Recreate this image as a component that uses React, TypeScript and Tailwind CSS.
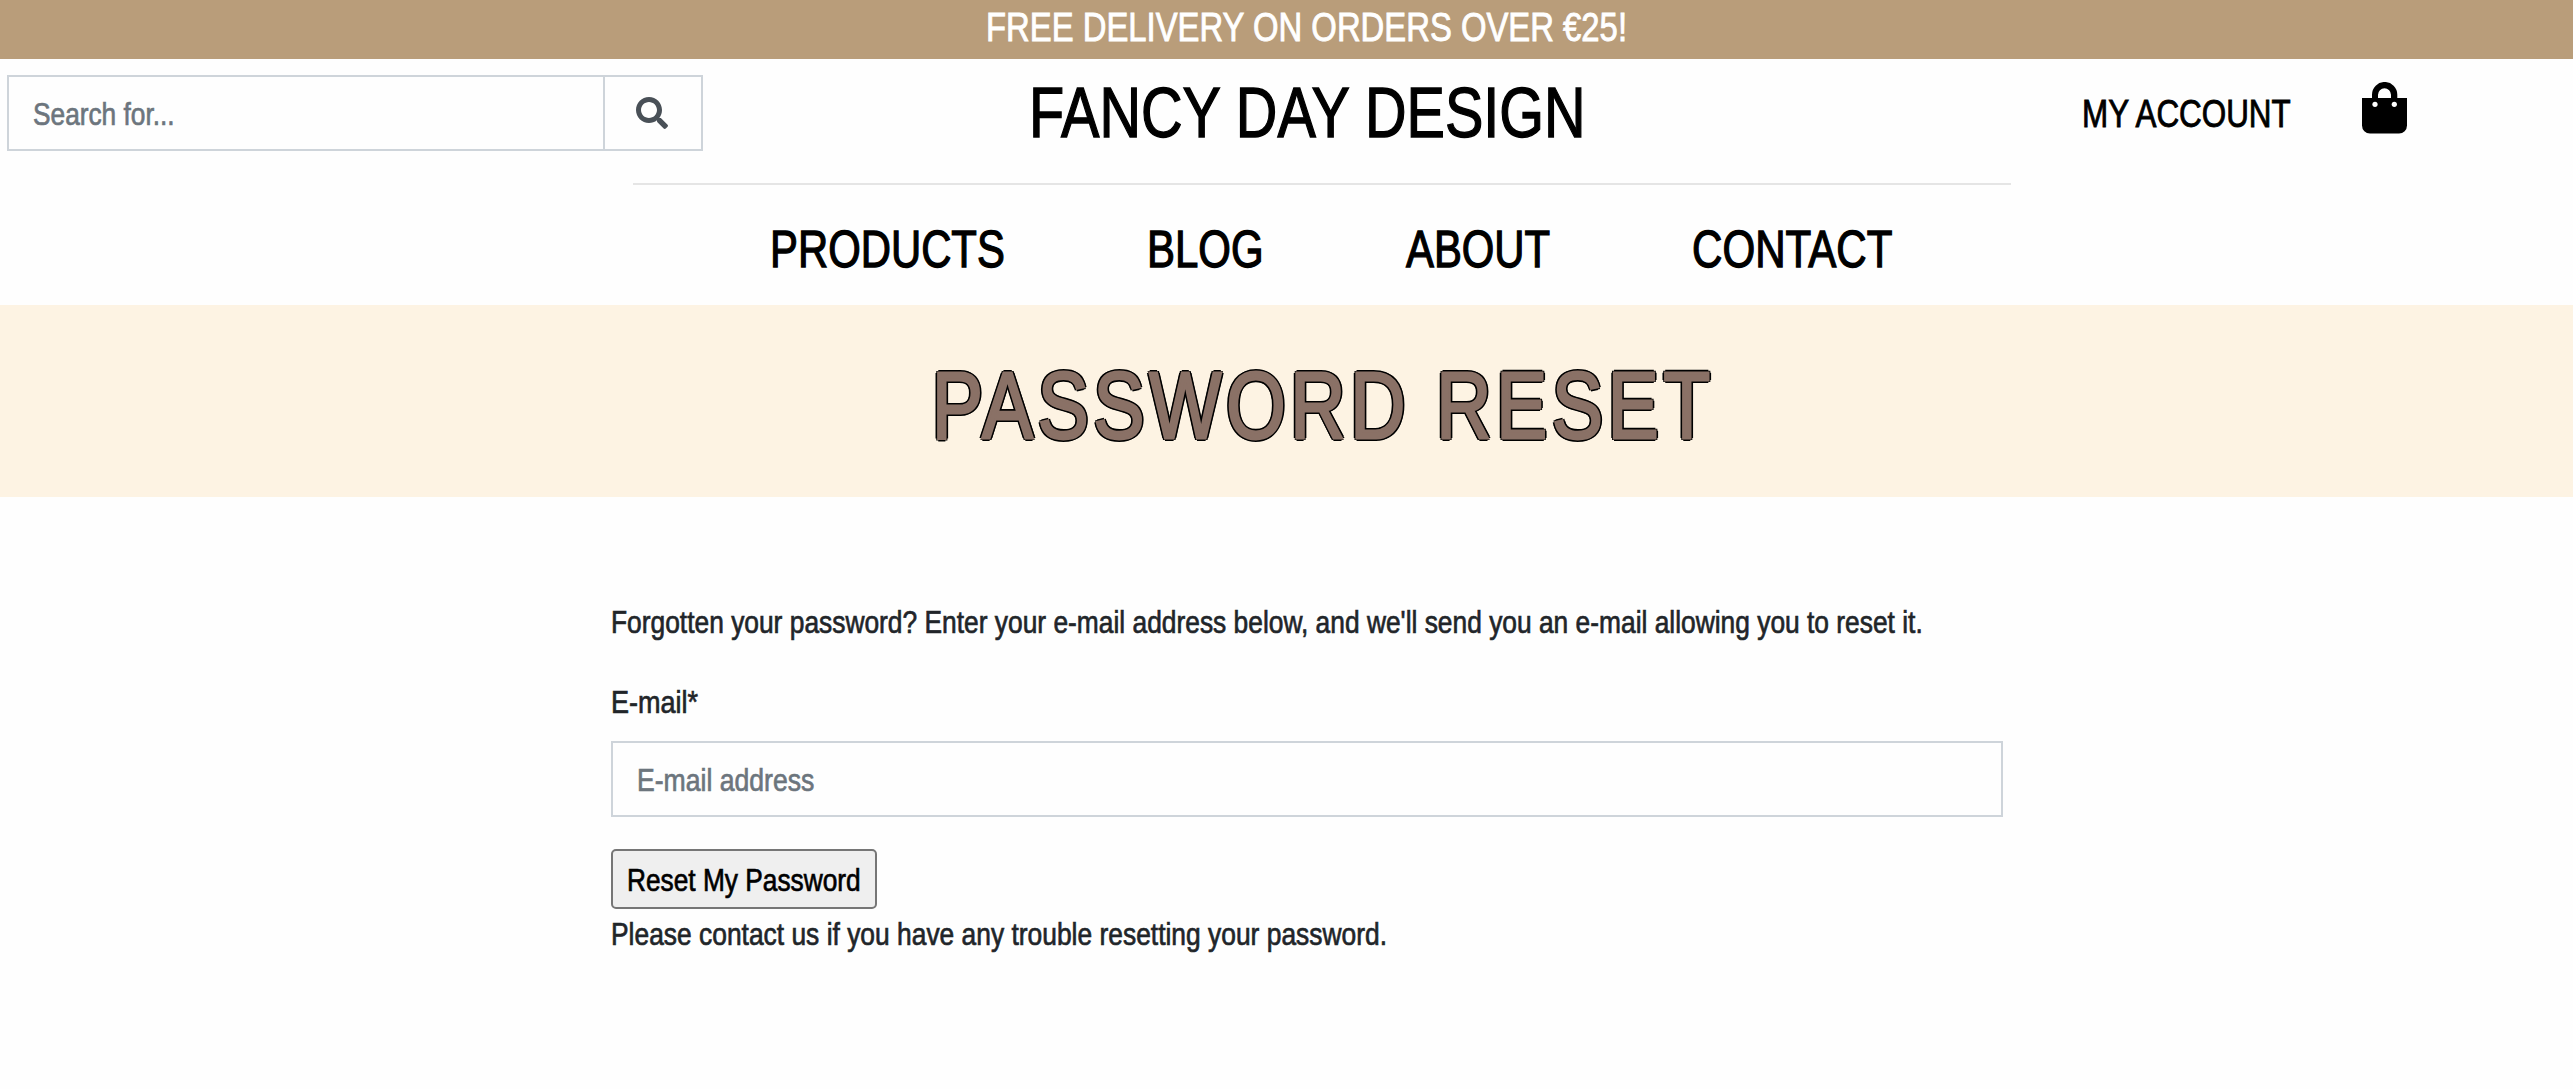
import { useLayoutEffect, useRef } from 'react';
import { FaSearch } from 'react-icons/fa';

/** A single line of text condensed horizontally to fill its box. */
function Condensed({ children, className }: { children: string; className: string }) {
  const box = useRef<HTMLSpanElement>(null);
  const inner = useRef<HTMLSpanElement>(null);
  useLayoutEffect(() => {
    if (box.current && inner.current) {
      inner.current.style.transform = `scaleX(${box.current.clientWidth / inner.current.offsetWidth})`;
    }
  }, [children]);
  return (
    <span ref={box} className={`block shrink-0 ${className}`}>
      <span ref={inner} className="inline-block origin-left whitespace-nowrap">
        {children}
      </span>
    </span>
  );
}

function BagIcon() {
  return (
    <svg viewBox="0 0 45 52" className="block h-[52px] w-[45px]" aria-hidden="true">
      <path
        fillRule="evenodd"
        d="M0 16H10V12.6a12.65 12.65 0 0 1 25.3 0V16H45V43.5a8 8 0 0 1-8 8H8a8 8 0 0 1-8-8ZM16 16H29V12.8a6.5 6.5 0 0 0-13 0Z"
      />
      <circle cx="13" cy="22.3" r="2.6" fill="white" />
      <circle cx="32.3" cy="22.3" r="2.6" fill="white" />
    </svg>
  );
}

export default function App() {
  return (
    <div className="h-[1089px] w-[2573px] overflow-hidden bg-[#fefefe] font-['Liberation_Sans',sans-serif] text-[32px] leading-[48px] text-[#212529] [-webkit-text-stroke:0.7px]">
      <div className="h-[59px] bg-[#b99d7a] pl-[986px] text-[40px] leading-[54px] text-white [-webkit-text-stroke:0.9px]">
        <Condensed className="w-[641px]">FREE DELIVERY ON ORDERS OVER €25!</Condensed>
      </div>

      <header className="h-[246px] text-black">
        <div className="flex h-[124px] items-start pt-4 pl-[7px]">
          <form className="flex h-[76px] w-[696px] border-2 border-[#ced4da] text-[#6c757d]">
            <div className="flex w-[594px] items-center pt-0.5 pl-6">
              <Condensed className="w-[142px]">Search for...</Condensed>
            </div>
            <button type="button" className="flex flex-1 items-center justify-center border-l-2 border-[#ced4da] pr-0.5 text-[#495057]">
              <FaSearch className="size-8" />
            </button>
          </form>
          <h1 className="ml-[326px] text-[71px] leading-[75px] [-webkit-text-stroke:1.4px]">
            <Condensed className="w-[557px]">FANCY DAY DESIGN</Condensed>
          </h1>
          <a className="ml-[496px] text-[39.5px] leading-[76px] [-webkit-text-stroke:0.9px]">
            <Condensed className="w-[209px]">MY ACCOUNT</Condensed>
          </a>
          <a className="mt-[7px] ml-[71px]">
            <BagIcon />
          </a>
        </div>
        <hr className="ml-[633px] w-[1378px] border-t-2 border-[#e5e5e5]" />
        <nav className="flex h-[120px] items-center gap-[142px] pt-[8px] pl-[770px] text-[52px] leading-[60px] [-webkit-text-stroke:1.3px]">
          <Condensed className="w-[235px]">PRODUCTS</Condensed>
          <Condensed className="w-[117px]">BLOG</Condensed>
          <Condensed className="w-[144px]">ABOUT</Condensed>
          <Condensed className="w-[200px]">CONTACT</Condensed>
        </nav>
      </header>

      <section className="h-[192px] bg-[#fdf3e3] pt-[41px] pl-[932px]">
        <h2 className="text-[94px] leading-[120px] tracking-[6px] text-[#8a7166] [-webkit-text-stroke:2.8px_#8a7166] [text-shadow:-3.4px_0_black,3.4px_0_black,0_3.2px_black,0_-3px_black,-2.4px_-2.2px_black,2.4px_-2.2px_black,-2.4px_2.4px_black,2.4px_2.4px_black]">
          <Condensed className="w-[783px]">PASSWORD RESET</Condensed>
        </h2>
      </section>

      <main className="flex flex-col items-start pt-[101px] pl-[611px]">
        <Condensed className="w-[1312px]">
          Forgotten your password? Enter your e-mail address below, and we'll send you an e-mail allowing you to reset it.
        </Condensed>
        <Condensed className="mt-8 w-[87px]">E-mail*</Condensed>
        <div className="mt-[15px] flex h-[76px] w-[1392px] items-center border-2 border-[#ced4da] pt-0.5 pl-6 text-[#6c757d]">
          <Condensed className="w-[177px]">E-mail address</Condensed>
        </div>
        <button type="button" className="mt-8 flex h-[60px] w-[266px] items-center justify-center rounded-[5px] border-2 border-[#767676] bg-[#efefef] pt-0.5 text-left text-black">
          <Condensed className="w-[234px]">Reset My Password</Condensed>
        </button>
        <Condensed className="mt-px w-[776px]">Please contact us if you have any trouble resetting your password.</Condensed>
      </main>
    </div>
  );
}
